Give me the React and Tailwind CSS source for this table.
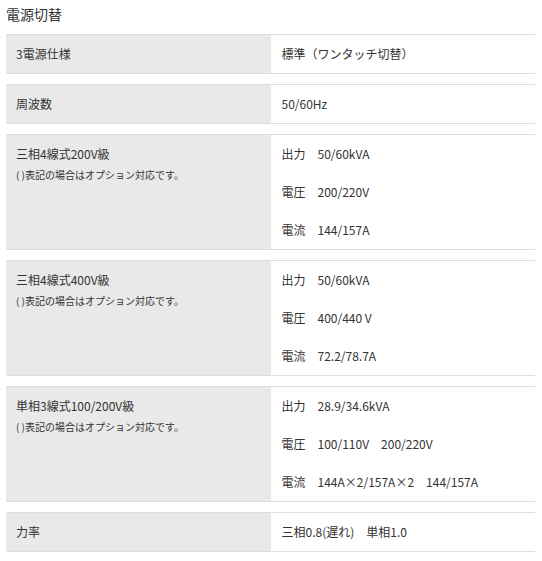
export default function App() {
  const rows = [
    { label: "3電源仕様", values: ["標準（ワンタッチ切替）"] },
    { label: "周波数", values: ["50/60Hz"] },
    {
      label: "三相4線式200V級",
      note: true,
      values: ["出力　50/60kVA", "電圧　200/220V", "電流　144/157A"],
    },
    {
      label: "三相4線式400V級",
      note: true,
      values: ["出力　50/60kVA", "電圧　400/440 V", "電流　72.2/78.7A"],
    },
    {
      label: "単相3線式100/200V級",
      note: true,
      values: [
        "出力　28.9/34.6kVA",
        "電圧　100/110V　200/220V",
        "電流　144A×2/157A×2　144/157A",
      ],
    },
    { label: "力率", values: ["三相0.8(遅れ)　単相1.0"] },
  ];
  return (
    <div
      className="w-[542px] h-[561px] bg-white text-[#333] pl-[6px] pr-[7px]"
      style={{ fontFamily: '"Noto Sans CJK JP", "Noto Sans", sans-serif' }}
    >
      <h2 className="pt-[4px] text-[14px] leading-[20px] font-normal mb-[10px]">電源切替</h2>
      <div className="flex flex-col gap-[10px]">
        {rows.map((r, i) => (
          <div key={i} className="grid grid-cols-2 border-y border-[#dedede]">
            <div className="bg-[#e9e9e9] px-[10px] py-[10px]">
              <div className="text-[12px] leading-[18px]">{r.label}</div>
              {r.note && (
                <div className="text-[10px] leading-[14px] mt-[5px]">( )表記の場合はオプション対応です。</div>
              )}
            </div>
            <div className="px-[11px] py-[10px] flex flex-col gap-[20px]">
              {r.values.map((v, j) => (
                <div key={j} className="text-[12px] leading-[18px] whitespace-pre">
                  {v}
                </div>
              ))}
            </div>
          </div>
        ))}
      </div>
    </div>
  );
}
